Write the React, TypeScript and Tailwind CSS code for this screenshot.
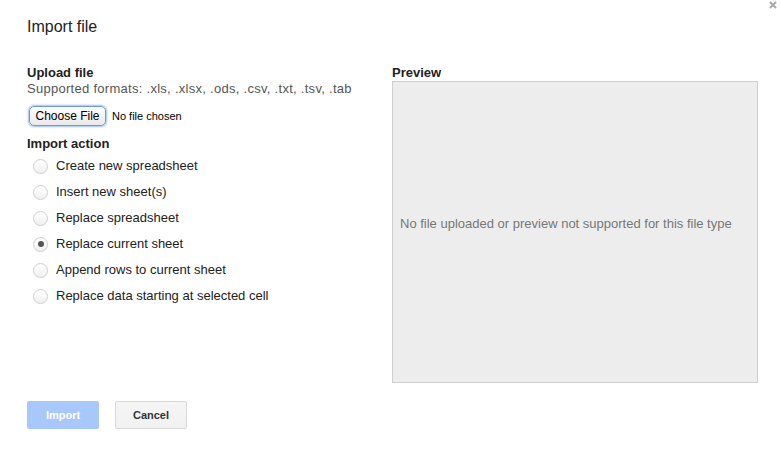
import React from 'react'

const actions = [
  'Create new spreadsheet',
  'Insert new sheet(s)',
  'Replace spreadsheet',
  'Replace current sheet',
  'Append rows to current sheet',
  'Replace data starting at selected cell',
]

function Radio({ checked }: { checked?: boolean }) {
  return (
    <span className="ml-[6px] mr-[8px] flex h-[15px] w-[15px] items-center justify-center rounded-full border border-[#cfcfcf] bg-gradient-to-b from-white to-[#f0f0f0]">
      {checked && <span className="h-[6px] w-[6px] rounded-full bg-[#555]" />}
    </span>
  )
}

export default function App() {
  return (
    <div
      className="relative h-[454px] w-[781px] overflow-hidden bg-white pl-[27px] pt-[17px] text-[#222]"
      style={{ fontFamily: '"Liberation Sans", Arial, sans-serif' }}
    >
      {/* close */}
      <svg className="absolute right-[4px] top-[1px] h-[8px] w-[8px]" viewBox="0 0 8 8">
        <path d="M1 1 L7 7 M7 1 L1 7" stroke="#a8a8a8" strokeWidth="2" />
      </svg>

      <h1 className="text-[16px] leading-[20px]">Import file</h1>

      <div className="mt-[28px] grid grid-cols-[365px_366px]">
        {/* Colonna sinistra */}
        <div className="text-[13px] leading-[16px]">
          <div className="font-bold">Upload file</div>
          <div className="tracking-[0.28px] text-[#555]">Supported formats: .xls, .xlsx, .ods, .csv, .txt, .tsv, .tab</div>

          <div className="mt-[9px] flex h-[20px] items-center">
            <span className="ml-[2px] flex h-[20px] w-[77px] items-center justify-center rounded-[5px] border border-[#6f98d6] bg-gradient-to-b from-white to-[#e9e9e9] text-[12px] text-black shadow-[0_0_2px_1px_#9cc0ef]">
              Choose File
            </span>
            <span className="ml-[6px] text-[11px] text-black">No file chosen</span>
          </div>

          <div className="mt-[10px] font-bold">Import action</div>
          <div className="mt-px">
            {actions.map((a, i) => (
              <div key={a} className="flex h-[26px] items-center">
                <Radio checked={i === 3} />
                <span>{a}</span>
              </div>
            ))}
          </div>
        </div>

        {/* Colonna destra: anteprima */}
        <div className="text-[13px] leading-[16px]">
          <div className="font-bold">Preview</div>
          <div className="flex h-[302px] items-center border border-[#cfcfcf] bg-[#ededed] pb-[16px] pl-[7px] text-[#777]">
            No file uploaded or preview not supported for this file type
          </div>
        </div>
      </div>

      <div className="mt-[18px] flex gap-[16px]">
        <button className="h-[28px] w-[72px] rounded-[2px] bg-[#a8c7fb] text-[11px] font-bold text-white">
          Import
        </button>
        <button className="h-[28px] w-[72px] rounded-[2px] border border-[#d9d9d9] bg-gradient-to-b from-[#f5f5f5] to-[#f1f1f1] text-[11px] font-bold text-[#333]">
          Cancel
        </button>
      </div>
    </div>
  )
}
